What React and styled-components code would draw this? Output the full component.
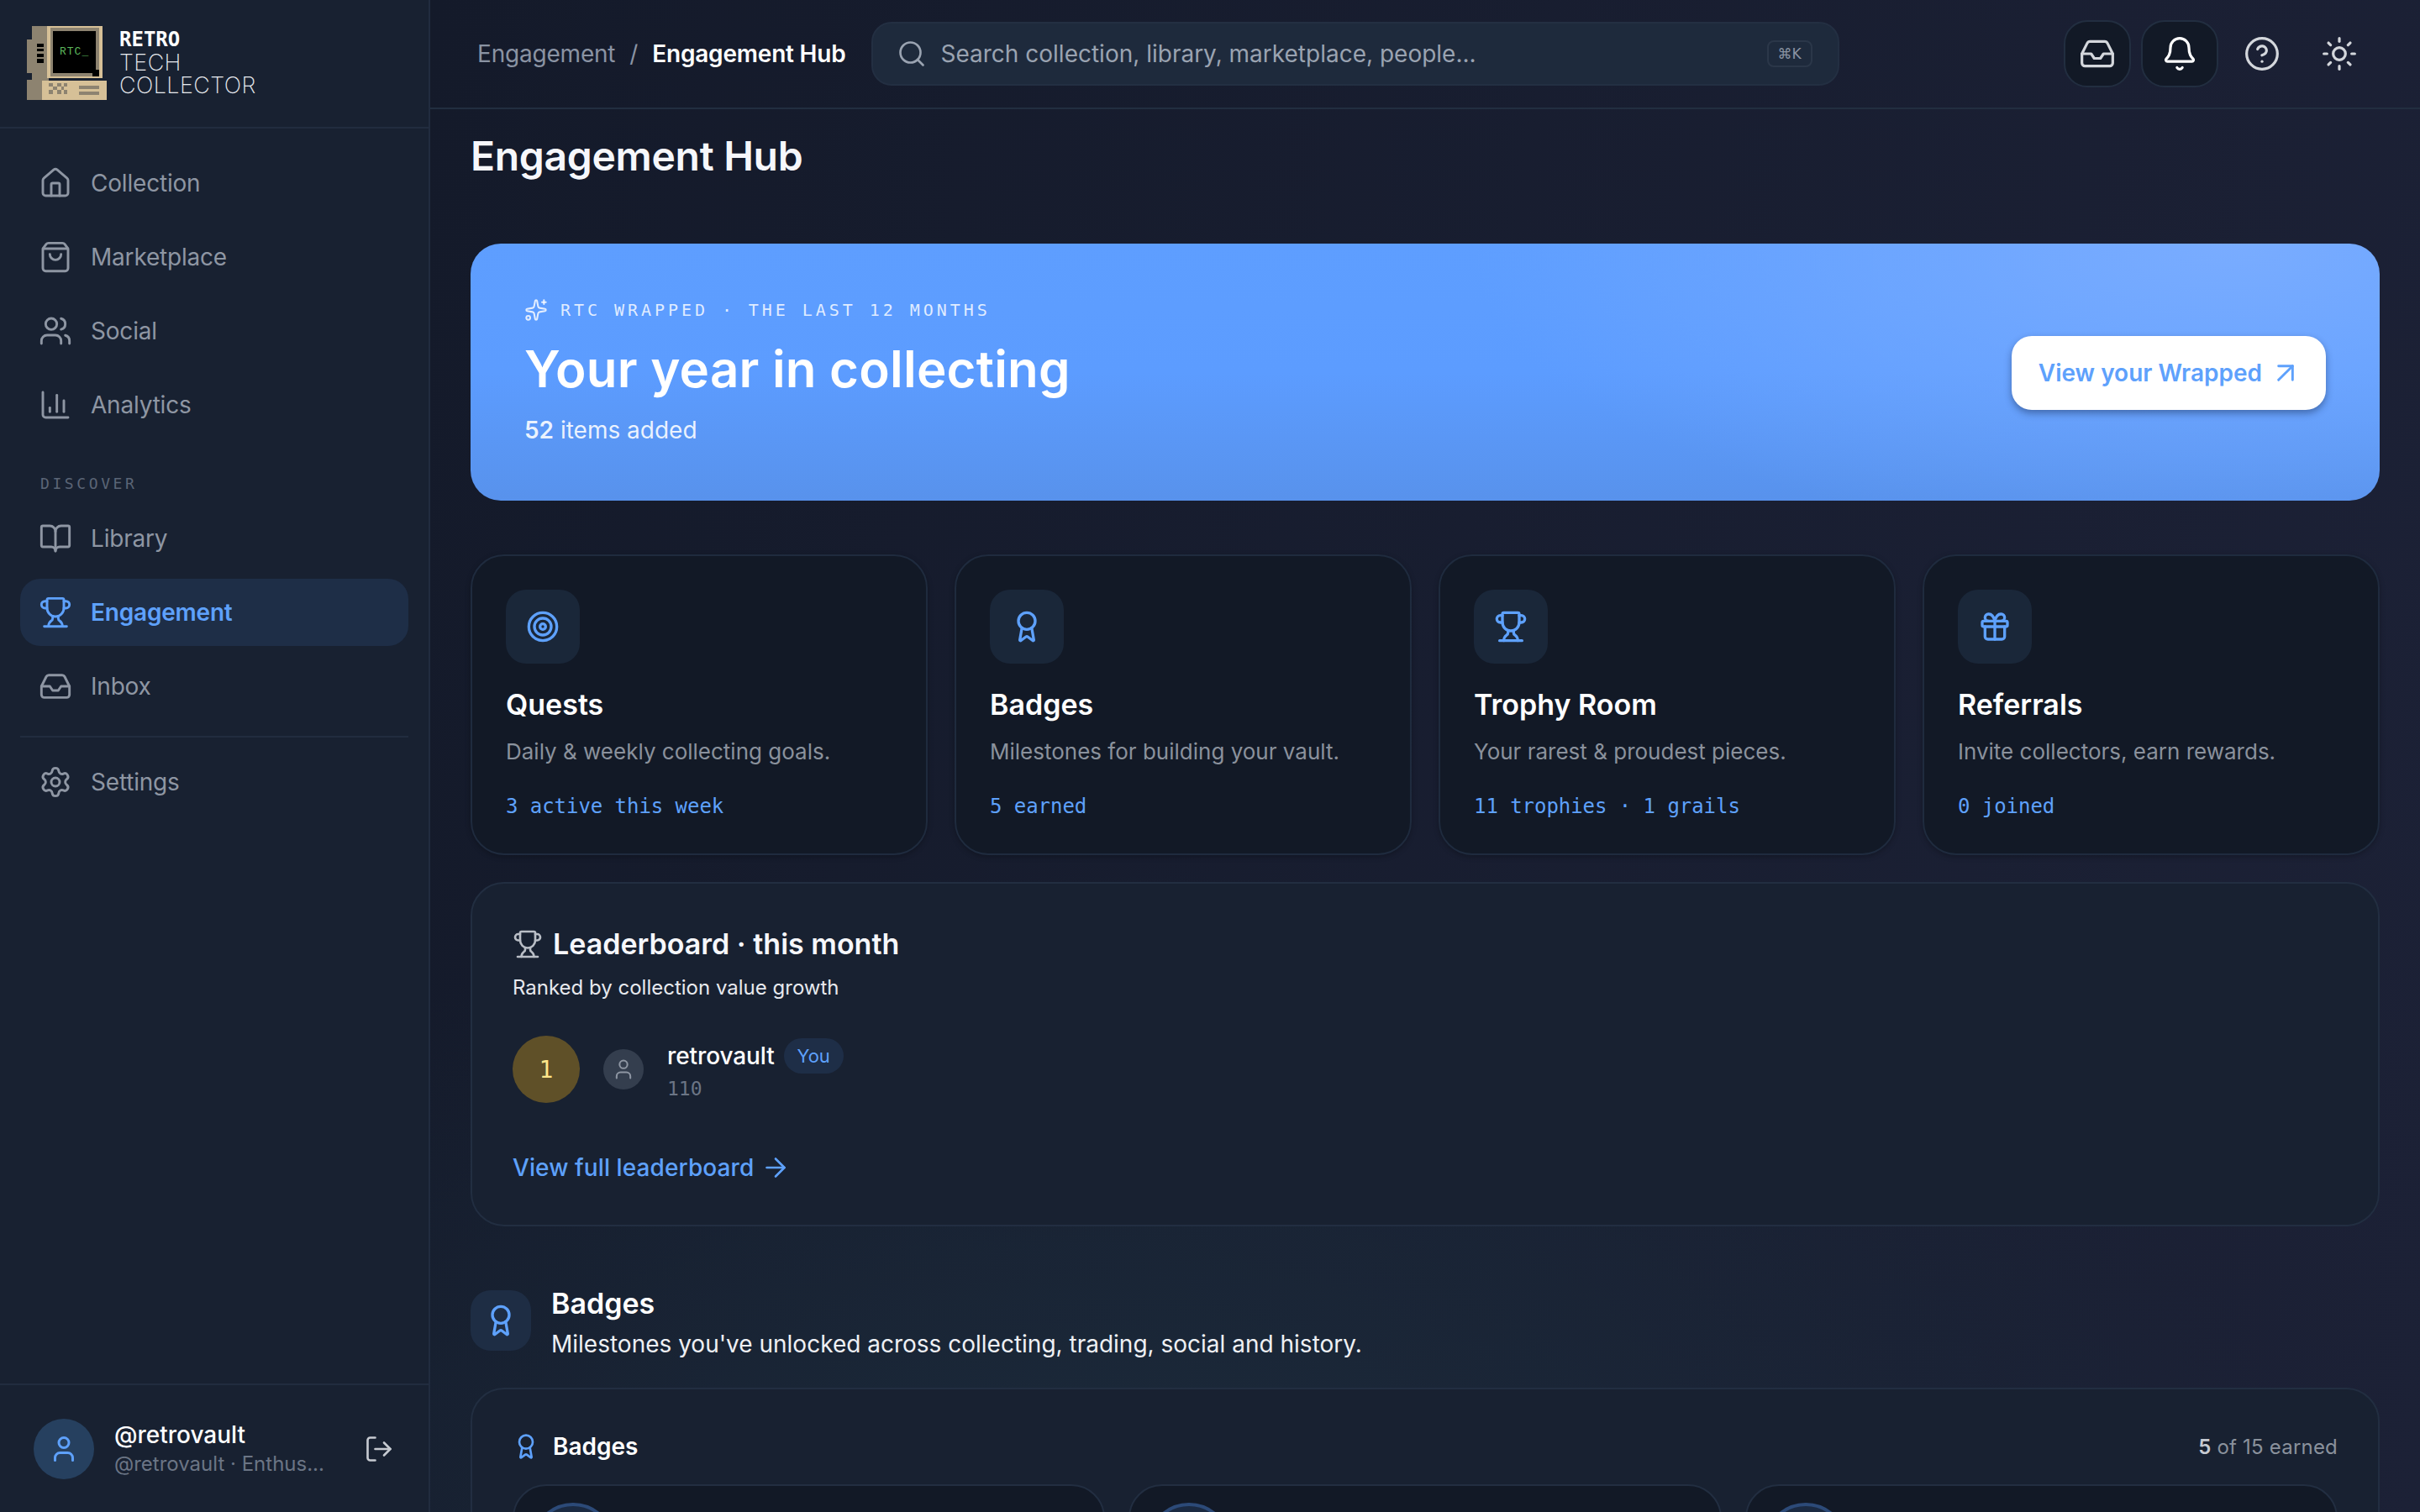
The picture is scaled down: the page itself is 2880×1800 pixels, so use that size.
import styled, { createGlobalStyle } from 'styled-components';
import {
  House, ShoppingBag, Users, ChartColumn, BookOpen, Trophy, Inbox, Settings, Search, Bell,
  CircleHelp, Sun, Target, Award, Gift, Sparkles, ArrowUpRight, ArrowRight, User, LogOut,
} from 'lucide-react';

const GlobalStyle = createGlobalStyle`
  html, body {
    margin: 0;
    height: 100%;
    overflow: hidden;
    background: #161c2d;
  }

  body {
    font-family: "Inter", "Liberation Sans", sans-serif;
    color: #fff;
  }

  * {
    box-sizing: border-box;
  }
`;

const MONO = `"DejaVu Sans Mono", "Liberation Mono", monospace`;

const Shell = styled.div`
  display: grid;
  grid-template-columns: 512px minmax(0, 1fr);
  grid-template-rows: 100vh;
  height: 100vh;
  overflow: hidden;
`;

const Sidebar = styled.aside`
  display: flex;
  flex-direction: column;
  height: 100%;
  min-height: 0;
  background: #182131;
  border-right: 2px solid #212c3f;
`;

const Brand = styled.div`
  display: flex;
  align-items: center;
  flex: none;
  gap: 15px;
  height: 153px;
  padding: 0 32px 2px;
  border-bottom: 2px solid #212c3f;
`;

const BrandText = styled.div`
  display: flex;
  flex-direction: column;
  color: #e8ebef;
  font-size: 27px;
  line-height: 27px;
  font-weight: 200;
  letter-spacing: 0.4px;
`;

const BrandRetro = styled.span`
  font-family: ${MONO};
  font-size: 24px;
  font-weight: 700;
  letter-spacing: 0;
  color: #fff;
`;

const Nav = styled.nav`
  display: flex;
  flex-direction: column;
  gap: 8px;
  padding: 25px 24px 0;
`;

const NavItem = styled.a`
  display: flex;
  align-items: center;
  gap: 22px;
  height: 80px;
  padding: 0 22px;
  border-radius: 24px;
  font-size: 28px;
  letter-spacing: -0.2px;
  font-weight: ${p => (p.$active ? 600 : 400)};
  color: ${p => (p.$active ? '#5ea1fc' : '#8e96a3')};
  background: ${p => (p.$active ? '#1e2e47' : 'transparent')};
`;

const NavLabel = styled.div`
  height: 24px;
  margin: 34px 0 5px;
  padding-left: 24px;
  font-family: ${MONO};
  font-size: 18px;
  line-height: 24px;
  letter-spacing: 3.6px;
  color: #5b6576;
`;

const NavDivider = styled.hr`
  width: 100%;
  height: 2px;
  margin: 11px 0 5px;
  border: 0;
  background: #212c3f;
`;

const UserBar = styled.div`
  display: flex;
  align-items: center;
  flex: none;
  margin-top: auto;
  height: 153px;
  padding: 0 32px 0 40px;
  border-top: 2px solid #212c3f;
`;

const UserAvatar = styled.div`
  display: flex;
  align-items: center;
  justify-content: center;
  flex: none;
  width: 72px;
  height: 72px;
  margin-right: 24px;
  border-radius: 50%;
  color: #5ea1fc;
  background: #26405f;
`;

const UserInfo = styled.div`
  flex: 1;
  min-width: 0;
`;

const UserName = styled.div`
  font-size: 28px;
  line-height: 36px;
  font-weight: 500;
`;

const UserMeta = styled.div`
  font-size: 24px;
  line-height: 34px;
  color: #6b7585;
  white-space: nowrap;
`;

const LogoutIcon = styled.div`
  display: flex;
  margin-right: 9px;
  color: #c6cad1;
`;

const Main = styled.div`
  display: flex;
  flex-direction: column;
  min-width: 0;
  min-height: 0;
  height: 100%;
  background:
    radial-gradient(ellipse 1400px 760px at 35% 100%, #1b2a3a 0, transparent 100%),
    linear-gradient(100deg, #141a2a 0, #1c2136 100%);
`;

const Topbar = styled.header`
  display: flex;
  align-items: center;
  flex: none;
  height: 130px;
  padding: 0 50px 0 56px;
  border-bottom: 2px solid #222e40;
`;

const Crumbs = styled.div`
  display: flex;
  align-items: center;
  gap: 17px;
  font-size: 28px;
  letter-spacing: -0.2px;
  color: #8a93a3;
  white-space: nowrap;
`;

const CrumbCurrent = styled.span`
  color: #fff;
  font-weight: 600;
`;

const SearchBox = styled.div`
  display: flex;
  align-items: center;
  gap: 17px;
  width: 1152px;
  height: 76px;
  margin-left: 30px;
  padding: 0 30px 0 28px;
  border: 2px solid #232f42;
  border-radius: 24px;
  background: #1e2a3c;
  color: #9aa3b1;
  font-size: 28px;
`;

const SearchText = styled.span`
  flex: 1;
`;

const Kbd = styled.kbd`
  display: flex;
  align-items: center;
  justify-content: center;
  width: 54px;
  height: 32px;
  border: 2px solid #2b3749;
  border-radius: 8px;
  font-family: "DejaVu Sans", sans-serif;
  font-size: 17px;
  color: #8a93a3;
`;

const Actions = styled.div`
  display: flex;
  align-items: center;
  margin-left: auto;
`;

const IconButton = styled.button`
  display: flex;
  align-items: center;
  justify-content: center;
  width: ${p => p.$width}px;
  height: 80px;
  margin-left: ${p => p.$gap}px;
  padding: 0;
  border: 2px solid ${p => (p.$plain ? 'transparent' : '#222e40')};
  border-radius: 28px;
  background: ${p => (p.$plain ? 'transparent' : '#121926')};
  color: ${p => p.$color};
`;

const Content = styled.main`
  flex: 1;
  min-height: 0;
  overflow: hidden;
  padding: 24px 48px 0;
`;

const PageTitle = styled.h1`
  margin: 0 0 72px;
  font-size: 48px;
  line-height: 64px;
  font-weight: 600;
  letter-spacing: -0.3px;
  color: #f6f7fb;
`;

const Banner = styled.section`
  display: flex;
  align-items: center;
  justify-content: space-between;
  height: 306px;
  padding: 0 64px;
  border-radius: 36px;
  background:
    radial-gradient(ellipse 900px 360px at 92% 0, #79acff 0, rgba(121, 172, 255, 0) 100%),
    linear-gradient(180deg, #5e9eff 0, #5c9cff 50%, #5892ec 100%);
`;

const Eyebrow = styled.div`
  display: flex;
  align-items: center;
  gap: 15px;
  font-family: ${MONO};
  font-size: 20px;
  line-height: 28px;
  letter-spacing: 3.95px;
  color: rgba(255, 255, 255, 0.82);
`;

const BannerTitle = styled.h2`
  margin: 20px 0 17px;
  font-size: 60px;
  line-height: 72px;
  font-weight: 600;
  letter-spacing: 0.22px;
`;

const BannerMeta = styled.p`
  margin: 0;
  font-size: 28px;
  line-height: 40px;
  color: rgba(255, 255, 255, 0.88);

  b {
    font-weight: 600;
  }
`;

const WrappedButton = styled.button`
  display: flex;
  align-items: center;
  gap: 8px;
  height: 88px;
  margin: 2px 0 0;
  padding: 0 28px 0 32px;
  border: 0;
  border-radius: 24px;
  background: #fff;
  color: #5ea1fc;
  font-family: inherit;
  font-size: 28px;
  font-weight: 600;
  box-shadow: 0 4px 8px rgba(20, 40, 80, 0.45);
`;

const TileGrid = styled.div`
  display: grid;
  grid-template-columns: repeat(4, 1fr);
  gap: 32px;
  margin: 64px 0 32px;
`;

const Tile = styled.article`
  height: 358px;
  padding: 40px;
  border: 2px solid #1f2b3e;
  border-radius: 40px;
  background: #121926;
  box-shadow: 0 2px 6px rgba(0, 0, 0, 0.25);
`;

const IconChip = styled.div`
  display: flex;
  align-items: center;
  justify-content: center;
  flex: none;
  width: ${p => p.$size}px;
  height: ${p => p.$size}px;
  border-radius: 24px;
  background: ${p => p.$bg};
  color: #5ea1fc;
`;

const TileTitle = styled.h3`
  margin: 25px 0 0;
  font-size: 34px;
  line-height: 48px;
  font-weight: 600;
`;

const TileText = styled.p`
  margin: 12px 0 0;
  font-size: 26px;
  line-height: 40px;
  color: #8a919c;
`;

const TileStat = styled.div`
  margin-top: 29px;
  font-family: ${MONO};
  font-size: 24px;
  line-height: 32px;
  letter-spacing: -0.05px;
  color: #5ea1fc;
`;

const Panel = styled.section`
  border: 2px solid #222e41;
  border-radius: 40px;
  background: #182131;
`;

const LeaderPanel = styled(Panel)`
  height: 410px;
  padding: 48px 48px 0;
`;

const PanelTitle = styled.h3`
  display: flex;
  align-items: center;
  gap: 12px;
  margin: 0;
  font-size: 34px;
  line-height: 48px;
  font-weight: 600;
  color: #f6f7fb;

  svg {
    color: #b9bec6;
  }
`;

const PanelSub = styled.p`
  margin: 10px 0 0;
  font-size: 24px;
  line-height: 36px;
  color: #e7e9ee;
`;

const LeaderRow = styled.div`
  display: flex;
  align-items: center;
  gap: 28px;
  margin-top: 39px;
`;

const Rank = styled.div`
  display: flex;
  align-items: center;
  justify-content: center;
  width: 80px;
  height: 80px;
  border-radius: 50%;
  background: #5f5028;
  color: #fde68a;
  font-family: ${MONO};
  font-size: 28px;
`;

const RowAvatar = styled.div`
  display: flex;
  align-items: center;
  justify-content: center;
  width: 48px;
  height: 48px;
  border-radius: 50%;
  background: #343e4e;
  color: #8e96a3;
`;

const RowName = styled.div`
  display: flex;
  align-items: center;
  gap: 11px;
  font-size: 28px;
  line-height: 42px;
  font-weight: 500;
  letter-spacing: -0.1px;
`;

const YouTag = styled.span`
  padding: 0 16px;
  border-radius: 21px;
  background: #1e2e47;
  color: #5ea1fc;
  font-size: 22px;
  font-weight: 400;
`;

const RowScore = styled.div`
  margin-top: 3px;
  font-family: ${MONO};
  font-size: 23px;
  line-height: 30px;
  color: #6b7585;
`;

const PanelLink = styled.a`
  display: inline-flex;
  align-items: center;
  gap: 8px;
  margin-top: 57px;
  font-size: 28px;
  line-height: 40px;
  font-weight: 500;
  letter-spacing: 0.1px;
  color: #5ea1fc;
`;

const SectionHead = styled.div`
  display: flex;
  gap: 24px;
  height: 72px;
  margin: 76px 0 44px;
`;

const SectionText = styled.div`
  margin-top: -6px;
`;

const SectionTitle = styled.h2`
  margin: 0;
  font-size: 34px;
  line-height: 44px;
  font-weight: 600;
`;

const SectionSub = styled.p`
  margin: 6px 0 0;
  font-size: 28px;
  line-height: 40px;
  color: #eef0f4;
`;

const BadgePanel = styled(Panel)`
  padding: 48px;
`;

const BadgeHead = styled.div`
  display: flex;
  align-items: center;
  justify-content: space-between;
  height: 40px;
`;

const BadgeTitle = styled.div`
  display: flex;
  align-items: center;
  gap: 16px;
  font-size: 28px;
  font-weight: 600;

  svg {
    color: #5ea1fc;
  }
`;

const BadgeCount = styled.div`
  font-size: 24px;
  letter-spacing: 0.2px;
  color: #8a919c;

  b {
    font-weight: 600;
    color: #c6cad1;
  }
`;

const BadgeGrid = styled.div`
  display: grid;
  grid-template-columns: repeat(3, 1fr);
  gap: 28px;
  margin-top: 25px;
`;

const BadgeTile = styled.div`
  height: 200px;
  padding: 20px;
  border: 2px solid #222e41;
  border-radius: 40px;
  background: #121926;
`;

const BadgeRing = styled.div`
  width: 100px;
  height: 100px;
  border: 4px solid #2c4a78;
  border-radius: 50%;
  background: #1b2a42;
`;

function Logo() {
  return (
    <svg width="95" height="88" viewBox="0 0 95 88" style={{ flex: 'none' }}>
      <g fill="#8d8370">
        <rect x="6" y="0" width="20" height="16" />
        <rect x="0" y="16" width="26" height="40" />
        <rect x="6" y="56" width="20" height="8" />
        <rect x="0" y="64" width="26" height="24" />
      </g>
      <rect x="24" y="0" width="66" height="62" fill="#d6c097" />
      <rect x="18" y="65" width="77" height="23" fill="#d6c097" />
      <rect x="28" y="2" width="58" height="58" fill="#8d8370" />
      <rect x="31" y="6" width="51" height="50" fill="#000" />
      <rect x="78" y="52" width="8" height="8" fill="#000" />
      <g fill="#000">
        <rect x="12" y="21" width="8" height="4" />
        <rect x="12" y="27" width="8" height="3" />
        <rect x="12" y="33" width="8" height="4" />
        <rect x="12" y="39" width="8" height="5" />
      </g>
      <g fill="#8d8370">
        <rect x="26" y="68" width="5" height="4" />
        <rect x="36" y="68" width="5" height="4" />
        <rect x="44" y="68" width="4" height="4" />
        <rect x="31" y="72" width="5" height="4" />
        <rect x="41" y="72" width="3" height="4" />
        <rect x="26" y="76" width="5" height="5" />
        <rect x="36" y="76" width="5" height="5" />
        <rect x="44" y="76" width="4" height="5" />
        <rect x="62" y="71" width="24" height="4" />
        <rect x="62" y="78" width="24" height="4" />
      </g>
      <text x="39" y="34" fontFamily="Liberation Mono, monospace" fontSize="13" letterSpacing="1" fill="#5cb85c">RTC_</text>
    </svg>
  );
}

const mainLinks = [
  { label: 'Collection', icon: House },
  { label: 'Marketplace', icon: ShoppingBag },
  { label: 'Social', icon: Users },
  { label: 'Analytics', icon: ChartColumn },
];

const discoverLinks = [
  { label: 'Library', icon: BookOpen },
  { label: 'Engagement', icon: Trophy, active: true },
  { label: 'Inbox', icon: Inbox },
];

const tiles = [
  { title: 'Quests', text: 'Daily & weekly collecting goals.', stat: '3 active this week', icon: Target },
  { title: 'Badges', text: 'Milestones for building your vault.', stat: '5 earned', icon: Award },
  { title: 'Trophy Room', text: 'Your rarest & proudest pieces.', stat: '11 trophies · 1 grails', icon: Trophy },
  { title: 'Referrals', text: 'Invite collectors, earn rewards.', stat: '0 joined', icon: Gift },
];

function NavLink({ link }) {
  const Icon = link.icon;
  return (
    <NavItem $active={link.active}>
      <Icon size={40} strokeWidth={1.75} />
      {link.label}
    </NavItem>
  );
}

export default function App() {
  return (
    <Shell>
      <GlobalStyle />
      <Sidebar>
        <Brand>
          <Logo />
          <BrandText>
            <BrandRetro>RETRO</BrandRetro>
            <span>TECH</span>
            <span>COLLECTOR</span>
          </BrandText>
        </Brand>
        <Nav>
          {mainLinks.map(link => <NavLink key={link.label} link={link} />)}
          <NavLabel>DISCOVER</NavLabel>
          {discoverLinks.map(link => <NavLink key={link.label} link={link} />)}
          <NavDivider />
          <NavLink link={{ label: 'Settings', icon: Settings }} />
        </Nav>
        <UserBar>
          <UserAvatar><User size={36} /></UserAvatar>
          <UserInfo>
            <UserName>@retrovault</UserName>
            <UserMeta>@retrovault · Enthus...</UserMeta>
          </UserInfo>
          <LogoutIcon><LogOut size={36} strokeWidth={1.75} /></LogoutIcon>
        </UserBar>
      </Sidebar>

      <Main>
        <Topbar>
          <Crumbs>
            <span>Engagement</span>
            <span>/</span>
            <CrumbCurrent>Engagement Hub</CrumbCurrent>
          </Crumbs>
          <SearchBox>
            <Search size={36} strokeWidth={1.75} />
            <SearchText>Search collection, library, marketplace, people...</SearchText>
            <Kbd>⌘K</Kbd>
          </SearchBox>
          <Actions>
            <IconButton $width={80} $gap={0} $color="#d4d7dc"><Inbox size={44} strokeWidth={1.75} /></IconButton>
            <IconButton $width={92} $gap={12} $color="#fff"><Bell size={44} strokeWidth={1.75} /></IconButton>
            <IconButton $width={92} $gap={6} $plain $color="#d4d7dc"><CircleHelp size={44} strokeWidth={1.75} /></IconButton>
            <IconButton $width={92} $gap={0} $plain $color="#d4d7dc"><Sun size={44} strokeWidth={1.75} /></IconButton>
          </Actions>
        </Topbar>

        <Content>
          <PageTitle>Engagement Hub</PageTitle>

          <Banner>
            <div>
              <Eyebrow><Sparkles size={28} strokeWidth={1.75} />RTC WRAPPED · THE LAST 12 MONTHS</Eyebrow>
              <BannerTitle>Your year in collecting</BannerTitle>
              <BannerMeta><b>52</b> items added</BannerMeta>
            </div>
            <WrappedButton>View your Wrapped <ArrowUpRight size={40} strokeWidth={1.75} /></WrappedButton>
          </Banner>

          <TileGrid>
            {tiles.map(tile => {
              const Icon = tile.icon;
              return (
                <Tile key={tile.title}>
                  <IconChip $size={88} $bg="#1a2739"><Icon size={40} /></IconChip>
                  <TileTitle>{tile.title}</TileTitle>
                  <TileText>{tile.text}</TileText>
                  <TileStat>{tile.stat}</TileStat>
                </Tile>
              );
            })}
          </TileGrid>

          <LeaderPanel>
            <PanelTitle><Trophy size={36} strokeWidth={1.75} />Leaderboard · this month</PanelTitle>
            <PanelSub>Ranked by collection value growth</PanelSub>
            <LeaderRow>
              <Rank>1</Rank>
              <RowAvatar><User size={28} strokeWidth={1.75} /></RowAvatar>
              <div>
                <RowName>retrovault <YouTag>You</YouTag></RowName>
                <RowScore>110</RowScore>
              </div>
            </LeaderRow>
            <PanelLink>View full leaderboard <ArrowRight size={36} strokeWidth={1.75} /></PanelLink>
          </LeaderPanel>

          <SectionHead>
            <IconChip $size={72} $bg="#1e2d44"><Award size={40} /></IconChip>
            <SectionText>
              <SectionTitle>Badges</SectionTitle>
              <SectionSub>Milestones you've unlocked across collecting, trading, social and history.</SectionSub>
            </SectionText>
          </SectionHead>

          <BadgePanel>
            <BadgeHead>
              <BadgeTitle><Award size={32} />Badges</BadgeTitle>
              <BadgeCount><b>5</b> of 15 earned</BadgeCount>
            </BadgeHead>
            <BadgeGrid>
              <BadgeTile><BadgeRing /></BadgeTile>
              <BadgeTile><BadgeRing /></BadgeTile>
              <BadgeTile><BadgeRing /></BadgeTile>
            </BadgeGrid>
          </BadgePanel>
        </Content>
      </Main>
    </Shell>
  );
}
